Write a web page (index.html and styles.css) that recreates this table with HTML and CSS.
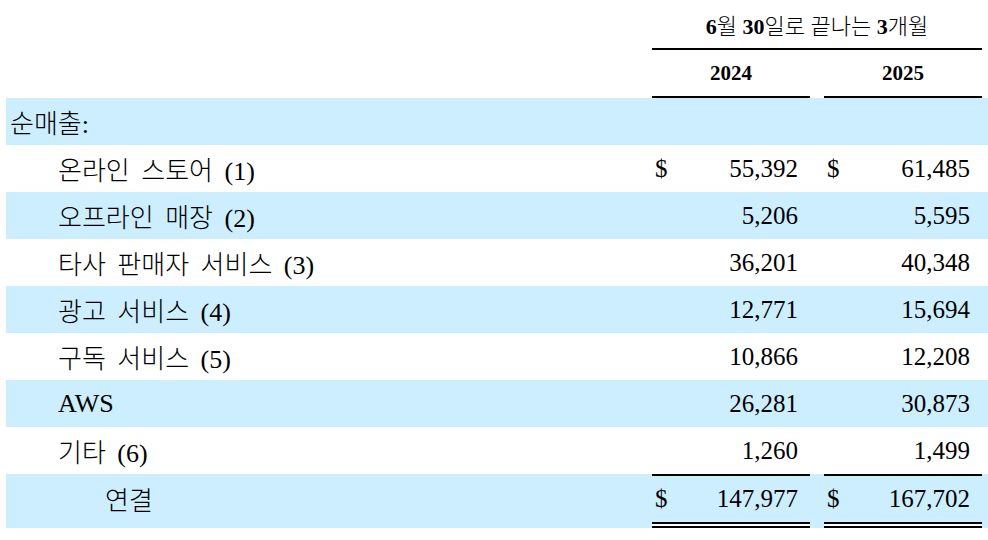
FILE: index.html
```html
<!DOCTYPE html>
<html lang="ko">
<head>
<meta charset="utf-8">
<link rel="stylesheet" href="styles.css">
</head>
<body>
<table class="fin">
  <colgroup>
    <col class="c-label">
    <col class="c-dollar">
    <col class="c-num">
    <col class="c-gap">
    <col class="c-dollar">
    <col class="c-num">
    <col class="c-pad">
  </colgroup>
  <tr class="h-title">
    <td></td>
    <th colspan="5" class="title"><span class="b">6</span>월 <span class="b">30</span>일로 끝나는 <span class="b">3</span>개월</th>
    <td></td>
  </tr>
  <tr class="h-year">
    <td></td>
    <th colspan="2" class="year">2024</th>
    <td></td>
    <th colspan="2" class="year">2025</th>
    <td></td>
  </tr>
  <tr class="row band">
    <td class="lbl l0">순매출:</td>
    <td></td><td></td><td></td><td></td><td></td><td></td>
  </tr>
  <tr class="row">
    <td class="lbl l1">온라인 스토어 (1)</td>
    <td class="dol">$</td><td class="num">55,392</td><td></td>
    <td class="dol">$</td><td class="num">61,485</td><td></td>
  </tr>
  <tr class="row band">
    <td class="lbl l1">오프라인 매장 (2)</td>
    <td class="dol"></td><td class="num">5,206</td><td></td>
    <td class="dol"></td><td class="num">5,595</td><td></td>
  </tr>
  <tr class="row">
    <td class="lbl l1">타사 판매자 서비스 (3)</td>
    <td class="dol"></td><td class="num">36,201</td><td></td>
    <td class="dol"></td><td class="num">40,348</td><td></td>
  </tr>
  <tr class="row band">
    <td class="lbl l1">광고 서비스 (4)</td>
    <td class="dol"></td><td class="num">12,771</td><td></td>
    <td class="dol"></td><td class="num">15,694</td><td></td>
  </tr>
  <tr class="row">
    <td class="lbl l1">구독 서비스 (5)</td>
    <td class="dol"></td><td class="num">10,866</td><td></td>
    <td class="dol"></td><td class="num">12,208</td><td></td>
  </tr>
  <tr class="row band">
    <td class="lbl l1">AWS</td>
    <td class="dol"></td><td class="num">26,281</td><td></td>
    <td class="dol"></td><td class="num">30,873</td><td></td>
  </tr>
  <tr class="row">
    <td class="lbl l1">기타 (6)</td>
    <td class="dol"></td><td class="num">1,260</td><td></td>
    <td class="dol"></td><td class="num">1,499</td><td></td>
  </tr>
  <tr class="row band total">
    <td class="lbl l2">연결</td>
    <td class="dol t">$</td><td class="num t">147,977</td><td></td>
    <td class="dol t">$</td><td class="num t">167,702</td><td></td>
  </tr>
</table>
</body>
</html>
```

FILE: styles.css
```css
html, body {
  margin: 0;
  padding: 0;
  background: #ffffff;
}

body {
  font-family: "Liberation Serif", "Noto Sans CJK KR", serif;
  color: #000000;
}

.fin {
  margin-left: 6px;
  width: 982px;
  table-layout: fixed;
  border-collapse: separate;
  border-spacing: 0;
  font-size: 25px;
}

.c-label { width: 646px; }
.c-dollar { width: 28px; }
.c-num { width: 130px; }
.c-gap { width: 14px; }
.c-pad { width: 6px; }

.fin td, .fin th {
  padding: 0;
  white-space: nowrap;
}

.h-title th,
.h-title td {
  height: 48px;
}

.title {
  font-size: 22px;
  font-weight: 300;
  text-align: center;
  vertical-align: middle;
  padding-top: 4px;
  border-bottom: 2px solid #000;
}

.title .b {
  font-weight: bold;
}

.h-year th,
.h-year td {
  height: 46px;
}

.year {
  font-size: 21px;
  font-weight: bold;
  text-align: center;
  vertical-align: middle;
  padding-top: 4px;
  border-bottom: 2px solid #000;
}

.row td {
  height: 47px;
  vertical-align: middle;
}

.band td {
  background: #cceeff;
}

.lbl {
  font-size: 26px;
  font-weight: 300;
  word-spacing: 5px;
  padding-top: 1px;
}
.l0 { padding-left: 4px !important; }
.l1 { padding-left: 52px !important; }
.l2 { padding-left: 99px !important; }

.dol {
  text-align: left;
  padding-left: 3px !important;
}

.num {
  text-align: right;
  padding-right: 12px !important;
}

.total td {
  height: 46px;
  border-bottom: 6px double transparent;
}

.total td.t {
  border-top: 2px solid #000;
  border-bottom: 6px double #000;
  background-clip: padding-box;
}
```
